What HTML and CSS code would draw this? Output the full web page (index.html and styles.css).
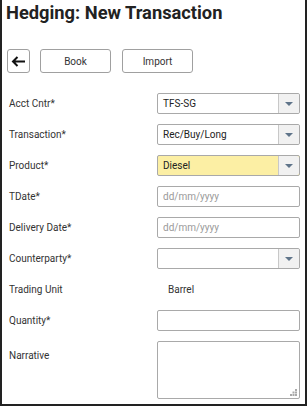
FILE: index.html
```html
<!DOCTYPE html>
<html>
<head>
<meta charset="utf-8">
<link rel="stylesheet" href="styles.css">
</head>
<body>
<div class="frame">
  <h1 class="title">Hedging: New Transaction</h1>
  <div class="toolbar">
    <button class="btn btn-back" aria-label="Back">
      <svg width="15" height="11" viewBox="0 0 15 11"><path d="M14 5.5H2M6.5 1L2 5.5L6.5 10" fill="none" stroke="#111" stroke-width="2"/></svg>
    </button>
    <button class="btn btn-text">Book</button>
    <button class="btn btn-text">Import</button>
  </div>
  <div class="form">
    <div class="row">
      <span class="label">Acct Cntr*</span>
      <div class="field select"><span class="value">TFS-SG</span><span class="drop"><i class="tri"></i></span></div>
    </div>
    <div class="row">
      <span class="label">Transaction*</span>
      <div class="field select"><span class="value">Rec/Buy/Long</span><span class="drop"><i class="tri"></i></span></div>
    </div>
    <div class="row">
      <span class="label">Product*</span>
      <div class="field select highlight"><span class="value">Diesel</span><span class="drop"><i class="tri"></i></span></div>
    </div>
    <div class="row">
      <span class="label">TDate*</span>
      <div class="field"><span class="value placeholder">dd/mm/yyyy</span></div>
    </div>
    <div class="row">
      <span class="label">Delivery Date*</span>
      <div class="field"><span class="value placeholder">dd/mm/yyyy</span></div>
    </div>
    <div class="row">
      <span class="label">Counterparty*</span>
      <div class="field select"><span class="value"></span><span class="drop"><i class="tri"></i></span></div>
    </div>
    <div class="row">
      <span class="label">Trading Unit</span>
      <span class="static">Barrel</span>
    </div>
    <div class="row">
      <span class="label">Quantity*</span>
      <div class="field"><span class="value"></span></div>
    </div>
    <div class="row row-top">
      <span class="label label-top">Narrative</span>
      <div class="field textarea">
        <svg class="grip" width="7" height="7" viewBox="0 0 7 7"><g fill="#aaa"><rect x="5" y="0" width="2" height="2"/><rect x="2.5" y="2.5" width="2" height="2"/><rect x="5" y="2.5" width="2" height="2"/><rect x="0" y="5" width="2" height="2"/><rect x="2.5" y="5" width="2" height="2"/><rect x="5" y="5" width="2" height="2"/></g></svg>
      </div>
    </div>
  </div>
</div>
</body>
</html>
```

FILE: styles.css
```css
* { box-sizing: border-box; }
html, body { margin: 0; padding: 0; background: #fff; }
body { font-family: Roboto, "Liberation Sans", Arial, sans-serif; color: #333; }
.frame {
  width: 307px;
  height: 406px;
  border-left: 2px solid #222;
  border-right: 2px solid #222;
  border-bottom: 2px solid #222;
  overflow: hidden;
}
.title {
  margin: 0;
  padding: 2px 0 0 4px;
  font-size: 18.3px;
  line-height: 22px;
  font-weight: 700;
  color: #222;
}
.toolbar {
  display: flex;
  align-items: center;
  margin-top: 25px;
  padding-left: 5px;
  height: 24px;
}
.btn {
  height: 24px;
  border: 1px solid #a0a0a0;
  border-radius: 3px;
  background: #fff;
  font-family: Roboto, "Liberation Sans", Arial, sans-serif;
  font-size: 10px;
  color: #333;
  padding: 0;
  display: flex;
  align-items: center;
  justify-content: center;
}
.btn-back { width: 23px; margin-right: 10px; }
.btn-text { width: 71px; margin-right: 11px; }
.form {
  margin-top: 20px;
  display: flex;
  flex-direction: column;
  gap: 10px;
}
.row {
  display: flex;
  align-items: center;
  height: 21px;
}
.row-top { align-items: flex-start; height: 58px; }
.label {
  width: 155px;
  padding-left: 7px;
  font-size: 10px;
  color: #333;
  flex: none;
}
.label-top { padding-top: 9px; }
.static { font-size: 10px; color: #333; padding-left: 11px; }
.field {
  width: 143px;
  height: 21px;
  border: 1px solid #a9a9a9;
  border-radius: 2px;
  background: #fff;
  display: flex;
  align-items: center;
  position: relative;
}
.field .value {
  flex: 1;
  padding-left: 5px;
  font-size: 10px;
  color: #222;
}
.placeholder { color: #9a9a9a !important; }
.highlight { background: #fcefa4; }
.drop {
  width: 21px;
  height: 100%;
  border-left: 1px solid #c8c8c8;
  background: #f1f1f1;
  display: flex;
  align-items: center;
  justify-content: center;
  border-radius: 0 2px 2px 0;
}
.tri {
  width: 0;
  height: 0;
  border-left: 4px solid transparent;
  border-right: 4px solid transparent;
  border-top: 4px solid #5f7489;
}
.textarea { height: 58px; }
.grip { position: absolute; right: 2px; bottom: 2px; }
```
